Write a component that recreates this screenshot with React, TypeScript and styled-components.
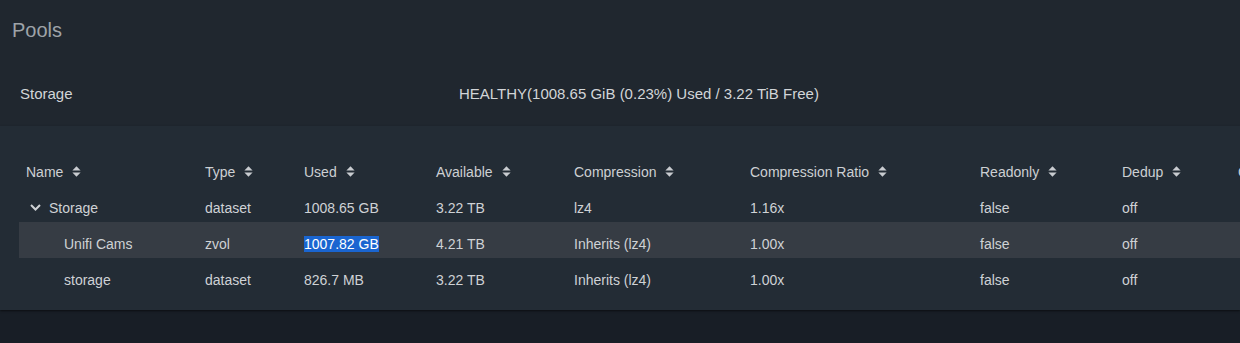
import React from "react";
import styled, { createGlobalStyle } from "styled-components";

const Global = createGlobalStyle`
  html, body { margin: 0; padding: 0; background: #181e26; }
  body { font-family: "Liberation Sans", Arial, sans-serif; }
`;

const Page = styled.div`
  width: 1240px;
  height: 343px;
  overflow: hidden;
  background: #181e26;
`;

const Header = styled.section`
  background: #20272f;
  padding: 19px 0 24px;
`;

const Title = styled.h2`
  margin: 0;
  padding-left: 12px;
  font-size: 20px;
  line-height: 23px;
  font-weight: 400;
  color: #9ea3a8;
`;

const Summary = styled.div`
  margin-top: 43px;
  display: grid;
  grid-template-columns: 439px 1fr;
  padding-left: 20px;
  font-size: 15px;
  line-height: 17px;
  color: #d2d5d8;
`;

const Panel = styled.section`
  background: #232c35;
  padding: 24px 0 16px 19px;
  overflow: hidden;
  box-shadow: 0 1px 2px rgba(0, 0, 0, 0.55);
  position: relative;
`;

const Table = styled.table`
  border-collapse: collapse;
  table-layout: fixed;
  width: 1400px;
  font-size: 14px;
  line-height: 16px;
  color: #cfd2d5;
`;

const Row = styled.tr<{ $active?: boolean }>`
  background: ${(p) => (p.$active ? "#363c44" : "transparent")};
`;

const Th = styled.th`
  text-align: left;
  font-weight: 400;
  padding: 14px 0 6px 7px;
  white-space: nowrap;
  color: #cdd0d3;
`;

const Td = styled.td<{ $indent?: number }>`
  padding: 14px 0 6px ${(p) => 7 + (p.$indent ?? 0)}px;
  white-space: nowrap;
`;

const SortIcon = styled.svg`
  margin-left: 9px;
  vertical-align: baseline;
  fill: #c9ccd0;
`;

const Chevron = styled.svg`
  margin: 0 8px 0 4px;
  vertical-align: 2px;
  stroke: #cfd2d5;
  fill: none;
`;

const Selected = styled.span`
  background: #1a65d0;
  color: #ffffff;
`;

const Sort = () => (
  <SortIcon width="9" height="11" viewBox="0 0 9 11">
    <path d="M4.5 0.3 L8.6 4.6 H0.4 Z" />
    <path d="M0.4 6.4 H8.6 L4.5 10.7 Z" />
  </SortIcon>
);

const columns = [
  { name: "Name", w: 179 },
  { name: "Type", w: 99 },
  { name: "Used", w: 132 },
  { name: "Available", w: 138 },
  { name: "Compression", w: 176 },
  { name: "Compression Ratio", w: 230 },
  { name: "Readonly", w: 142 },
  { name: "Dedup", w: 116 },
  { name: "Comments", w: 188 },
];

type Ds = {
  name: string;
  type: string;
  used: string;
  avail: string;
  comp: string;
  ratio: string;
  ro: string;
  dedup: string;
  child?: boolean;
  active?: boolean;
  selectedUsed?: boolean;
};

const rows: Ds[] = [
  { name: "Storage", type: "dataset", used: "1008.65 GB", avail: "3.22 TB", comp: "lz4", ratio: "1.16x", ro: "false", dedup: "off" },
  { name: "Unifi Cams", type: "zvol", used: "1007.82 GB", avail: "4.21 TB", comp: "Inherits (lz4)", ratio: "1.00x", ro: "false", dedup: "off", child: true, active: true, selectedUsed: true },
  { name: "storage", type: "dataset", used: "826.7 MB", avail: "3.22 TB", comp: "Inherits (lz4)", ratio: "1.00x", ro: "false", dedup: "off", child: true },
];

export default function App() {
  return (
    <Page>
      <Global />
      <Header>
        <Title>Pools</Title>
        <Summary>
          <span>Storage</span>
          <span>HEALTHY(1008.65 GiB (0.23%) Used / 3.22 TiB Free)</span>
        </Summary>
      </Header>
      <Panel>
        <Table>
          <colgroup>
            {columns.map((c) => (
              <col key={c.name} style={{ width: c.w }} />
            ))}
          </colgroup>
          <thead>
            <tr>
              {columns.map((c) => (
                <Th key={c.name}>
                  {c.name}
                  <Sort />
                </Th>
              ))}
            </tr>
          </thead>
          <tbody>
            {rows.map((r) => (
              <Row key={r.name} $active={r.active}>
                <Td $indent={r.child ? 38 : 0}>
                  {!r.child && (
                    <Chevron width="11" height="7" viewBox="0 0 11 7">
                      <polyline points="1,1 5.5,5.5 10,1" strokeWidth="2" />
                    </Chevron>
                  )}
                  {r.name}
                </Td>
                <Td>{r.type}</Td>
                <Td>{r.selectedUsed ? <Selected>{r.used}</Selected> : r.used}</Td>
                <Td>{r.avail}</Td>
                <Td>{r.comp}</Td>
                <Td>{r.ratio}</Td>
                <Td>{r.ro}</Td>
                <Td>{r.dedup}</Td>
                <Td></Td>
              </Row>
            ))}
          </tbody>
        </Table>
      </Panel>
    </Page>
  );
}
